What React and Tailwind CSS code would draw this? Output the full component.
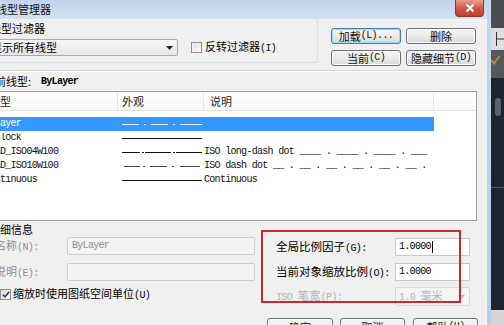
import React from "react";

const mono = "font-['Liberation_Mono',monospace] text-[10px] tracking-[-0.7px]";

// mnemonic part of a label, drawn in the narrow latin font
function Hk({ children, className = "" }) {
  return (
    <span className={`font-['Liberation_Mono',monospace] text-[10px] tracking-[-0.6px] ${className}`}>
      {children}
    </span>
  );
}

function Btn({ children, focus, className = "" }) {
  return (
    <div
      className={`flex items-center justify-center rounded-[3px] border bg-linear-to-b from-[#f4f4f4] via-[#ebebeb] to-[#d8d8d8] text-[11px] text-[#111] ${
        focus
          ? "border-[#3c7fb1] shadow-[inset_0_0_0_1px_#9bdaf7]"
          : "border-[#707070] shadow-[inset_0_0_0_1px_#fbfbfb]"
      } ${className}`}
    >
      {children}
    </div>
  );
}

function Sample({ segs, color }) {
  return (
    <svg width="80" height="14" viewBox="0 0 80 14" shapeRendering="crispEdges">
      {segs.map(([a, b], i) => (
        <rect key={i} x={a} y="7" width={b - a} height="1" fill={color} />
      ))}
    </svg>
  );
}

const rows = [
  {
    name: "ByLayer",
    segs: [[0, 17], [22, 24], [29, 46], [51, 53], [58, 80]],
    desc: "",
    selected: true,
  },
  { name: "ByBlock", segs: [[0, 80]], desc: "" },
  {
    name: "ACAD_ISO04W100",
    segs: [[0, 18], [20, 22], [23, 49], [51, 53], [54, 80]],
    desc: "ISO long-dash dot ____ . ____ . ____ . ___",
  },
  {
    name: "ACAD_ISO10W100",
    segs: [[2, 18], [21, 23], [28, 45], [50, 52], [58, 78]],
    desc: "ISO dash dot __ . __ . __ . __ . __ . __ .",
    gray: true,
  },
  { name: "Continuous", segs: [[0, 80]], desc: "Continuous" },
];

function Row({ row }) {
  const text = row.selected ? "text-white" : "text-[#111]";
  return (
    <div className="flex h-[14px] items-center">
      <div className={`flex h-[14px] w-[445px] items-center ${row.selected ? "bg-[#3399ff]" : ""}`}>
        <div className="w-[129px] overflow-hidden whitespace-nowrap">
          <div className={`-ml-[5px] ${mono} ${text}`}>{row.name}</div>
        </div>
        <div className="flex w-[86px] pl-[4px]">
          <Sample segs={row.segs} color={row.selected ? "#e8f2ff" : row.gray ? "#444" : "#111"} />
        </div>
        <div className={`w-[230px] whitespace-nowrap ${mono} ${text}`}>{row.desc}</div>
      </div>
    </div>
  );
}

export default function App() {
  return (
    <div className="flex h-[325px] w-[504px] overflow-hidden bg-[#1f2530] font-['Noto_Sans_CJK_SC',sans-serif] text-[11px] leading-none text-black">
      {/* dialog */}
      <div className="-ml-[12px] flex h-[325px] w-[499px] shrink-0 flex-col">
        {/* title bar */}
        <div className="flex h-[19px] shrink-0 items-start justify-between bg-linear-to-b from-[#bfd4ec] to-[#d4e2f2] pl-[8px]">
          <div className="mt-[4px] text-[11px] text-[#111]">线型管理器</div>
          <div className="mr-[3px] flex h-[17px] w-[29px] items-center justify-center rounded-b-[4px] border border-t-0 border-[#8c3a30] bg-linear-to-b from-[#e7a08f] via-[#d0584a] to-[#c0402f]">
            <svg width="10" height="8" viewBox="0 0 10 8">
              <path d="M1.5 0.5 L8.5 7.5 M8.5 0.5 L1.5 7.5" stroke="white" strokeWidth="2" />
            </svg>
          </div>
        </div>

        {/* client area */}
        <div className="relative flex flex-1 flex-col bg-[#f0f0f0]">
          {/* filter + buttons */}
          <div className="flex h-[51px] shrink-0">
            <div className="flex h-[44px] w-[330px] flex-col rounded-br-[3px] border-r border-b border-[#d5dfe5] pt-[3px]">
              <div className="h-[13px] pl-[2px] leading-[13px]">线型过滤器</div>
              <div className="mt-[4px] flex items-center">
                <div className="flex h-[17px] w-[190px] items-center justify-between rounded-[2px] border border-[#acacac] bg-linear-to-b from-[#f7f7f7] to-[#e6e6e6] pl-[2px] pr-[4px]">
                  <span>显示所有线型</span>
                  <svg width="7" height="4" viewBox="0 0 7 4">
                    <path d="M0 0 H7 L3.5 4 Z" fill="#222" />
                  </svg>
                </div>
                <div className="ml-[13px] h-[11px] w-[11px] border border-[#8f8f8f] bg-linear-to-br from-[#dcdcdc] to-[#fbfbfb] shadow-[inset_0_0_0_1px_#f4f4f4]" />
                <div className="ml-[3px]">
                  反转过滤器<Hk>(I)</Hk>
                </div>
              </div>
            </div>
            <div className="ml-[13px] mt-[9px] grid h-[38px] grid-cols-[70px_70px] gap-x-[5px] gap-y-[6px]">
              <Btn focus className="h-[16px]">
                加载<Hk>(L)...</Hk>
              </Btn>
              <Btn className="h-[16px]">删除</Btn>
              <Btn className="h-[16px]">
                当前<Hk>(C)</Hk>
              </Btn>
              <Btn className="h-[16px]">
                隐藏细节<Hk>(D)</Hk>
              </Btn>
            </div>
          </div>

          {/* separator */}
          <div className="h-[2px] w-[489px] shrink-0 border-t border-b border-t-[#d5d5d5] border-b-white" />

          {/* current linetype */}
          <div className="flex h-[19px] shrink-0 items-center">
            <div className="-ml-[4px] w-[57px]">当前线型:</div>
            <div className={`${mono} font-bold`}>ByLayer</div>
          </div>

          {/* list */}
          <div className="flex h-[130px] w-[489px] shrink-0 flex-col border border-[#9c9c9c] bg-white">
            <div className="flex h-[19px] shrink-0 items-center border-b border-[#e3e3e3] bg-linear-to-b from-white to-[#f7f8fa] text-[#1e1e1e]">
              <div className="flex h-[18px] w-[129px] items-center border-r border-[#e8e8e8]">线型</div>
              <div className="flex h-[18px] w-[86px] items-center border-r border-[#e8e8e8] pl-[4px]">外观</div>
              <div className="flex h-[18px] w-[230px] items-center border-r border-[#e8e8e8] pl-[6px]">说明</div>
            </div>
            <div className="flex flex-col pt-[6px]">
              {rows.map((r) => (
                <Row key={r.name} row={r} />
              ))}
            </div>
          </div>

          {/* details */}
          <div className="flex h-[97px] shrink-0">
            <div className="flex w-[267px] flex-col">
              <div className="mt-[1px] h-[14px] pl-[1px] leading-[14px]">详细信息</div>
              <div className="mt-[1px] flex h-[18px] items-center">
                <div className="w-[79px] pl-[7px] text-[#8f8f8f]">
                  名称<Hk>(N):</Hk>
                </div>
                <div className={`flex h-[18px] w-[188px] items-center rounded-[2px] border border-[#cfcfcf] bg-[#f3f3f3] pl-[4px] text-[#8f8f8f] ${mono}`}>
                  ByLayer
                </div>
              </div>
              <div className="mt-[8px] flex h-[18px] items-center">
                <div className="w-[79px] pl-[7px] text-[#8f8f8f]">
                  说明<Hk>(E):</Hk>
                </div>
                <div className="h-[18px] w-[188px] rounded-[2px] border border-[#cfcfcf] bg-[#f3f3f3]" />
              </div>
              <div className="mt-[7px] flex h-[12px] items-center pl-[12px]">
                <div className="flex h-[11px] w-[11px] items-center justify-center border border-[#8f8f8f] bg-linear-to-br from-[#dcdcdc] to-[#fbfbfb]">
                  <svg width="8" height="7" viewBox="0 0 8 7">
                    <path d="M0.8 3.5 L3 5.8 L7.2 0.8" stroke="#2a3d6b" strokeWidth="1.6" fill="none" />
                  </svg>
                </div>
                <div className="ml-[2px]">
                  缩放时使用图纸空间单位<Hk>(U)</Hk>
                </div>
              </div>
            </div>

            <div className="ml-[21px] flex flex-col pt-[17px]">
              <div className="flex h-[18px] items-center">
                <div className="w-[119px] text-[11.5px]">
                  全局比例因子<Hk>(G):</Hk>
                </div>
                <div className="flex h-[18px] w-[75px] items-center border border-[#c9c9c9] bg-white pl-[3px]">
                  <span className={mono}>1.0000</span>
                  <span className="ml-[1px] h-[12px] w-px bg-black" />
                </div>
              </div>
              <div className="mt-[7px] flex h-[18px] items-center">
                <div className="w-[119px] text-[11.5px]">
                  当前对象缩放比例<Hk>(O):</Hk>
                </div>
                <div className={`flex h-[18px] w-[75px] items-center border border-[#c9c9c9] bg-white pl-[3px] ${mono}`}>
                  1.0000
                </div>
              </div>
              <div className="mt-[6px] flex h-[19px] items-center text-[#b4b4b4]">
                <div className="w-[119px] text-[11.5px]">
                  <Hk>ISO </Hk>笔宽<Hk>(P):</Hk>
                </div>
                <div className="flex h-[19px] w-[75px] items-center justify-between rounded-[2px] border border-[#d9d9d9] bg-[#f4f4f4] pl-[3px] pr-[4px]">
                  <span>
                    <Hk>1.0 </Hk>毫米
                  </span>
                  <svg width="7" height="4" viewBox="0 0 7 4">
                    <path d="M0 0 H7 L3.5 4 Z" fill="#b8b8b8" />
                  </svg>
                </div>
              </div>
            </div>
          </div>

          {/* bottom buttons */}
          <div className="flex h-[22px] shrink-0 justify-end pr-[9px]">
            <Btn className="h-[22px] w-[66px] !items-start pt-[3px]">确定</Btn>
            <Btn className="ml-[7px] h-[22px] w-[65px] !items-start pt-[3px]">取消</Btn>
            <Btn className="ml-[8px] h-[22px] w-[65px] !items-start pt-[3px]">
              帮助<Hk>(H)</Hk>
            </Btn>
          </div>

          {/* red annotation frame */}
          <div className="absolute left-[273px] top-[211px] h-[73px] w-[200px] border-2 border-[#c62a2f]" />
        </div>
      </div>

      {/* window frame */}
      <div className="h-[325px] w-[4px] shrink-0 bg-linear-to-b from-[#c4d7ec] to-[#b9cfe6]" />

      {/* drawing area behind the dialog */}
      <div className="flex h-[325px] w-[13px] shrink-0 flex-col">
        <div className="h-[28px] bg-[#4a4d52]" />
        <div className="flex h-[22px] items-center bg-[#dedede] pl-[4px]">
          <svg width="9" height="14" viewBox="0 0 9 14">
            <path d="M1.5 0 V14 M1.5 7 H9" stroke="#333" strokeWidth="1" />
          </svg>
        </div>
        <div className="flex h-[28px] items-start bg-[#55585c] pt-[5px]">
          <svg width="9" height="10" viewBox="0 0 9 10">
            <path d="M0.5 5 L3 8.5 L8.5 1" stroke="#b48a4e" strokeWidth="2" fill="none" />
          </svg>
        </div>
        <div className="flex flex-1 flex-col bg-[#1f2530]">
          <div className="mt-[20px] ml-[4px] h-[18px] w-[6px] rounded-full bg-[#5b6370]" />
          <div className="mt-[71px] h-px bg-[#2c5a8c]" />
        </div>
        <div className="h-[15px] bg-[#d6d6d6]" />
      </div>
    </div>
  );
}
